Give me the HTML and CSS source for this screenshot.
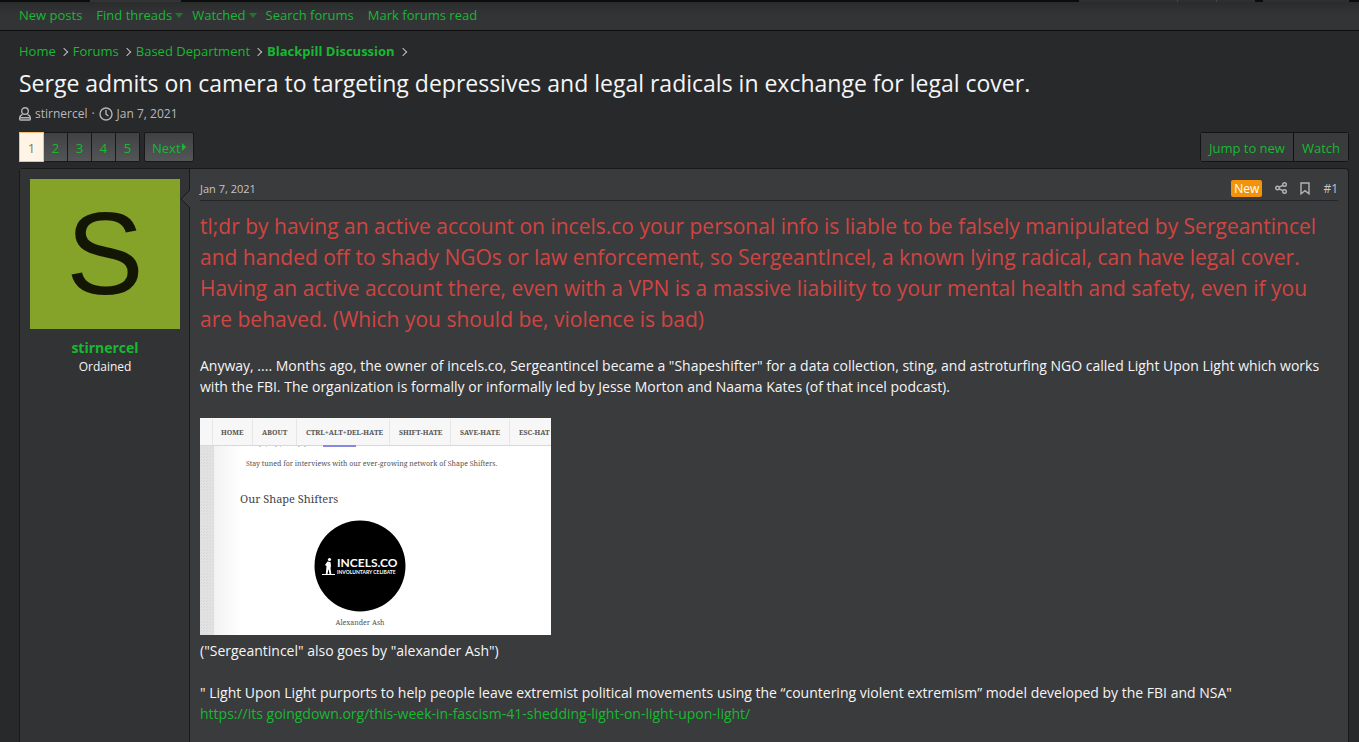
FILE: index.html
```html
<!DOCTYPE html>
<html lang="en">
<head>
    <meta charset="UTF-8">
    <meta name="viewport" content="width=device-width, initial-scale=1.0">
    <title>Serge admits on camera to targeting depressives and legal radicals in exchange for legal cover.</title>
    <link rel="stylesheet" href="styles.css">
</head>
<body>
    <div class="topbar">
        <div class="topbar-tab"></div>
        <div class="topbar-group">
            <div></div>
            <div></div>
            <div></div>
        </div>
        <div class="topbar-search"></div>
    </div>
    <nav class="subnav">
        <a href="#">New posts</a>
        <a href="#" class="has-menu">Find threads</a>
        <a href="#" class="has-menu">Watched</a>
        <a href="#">Search forums</a>
        <a href="#">Mark forums read</a>
    </nav>

    <main class="page">
        <ul class="breadcrumbs">
            <li><a href="#">Home</a></li>
            <li><a href="#">Forums</a></li>
            <li><a href="#">Based Department</a></li>
            <li><a href="#" class="current">Blackpill Discussion</a></li>
        </ul>
        <h1>Serge admits on camera to targeting depressives and legal radicals in exchange for legal cover.</h1>
        <div class="thread-info">
            <svg class="icon" width="12" height="14" viewBox="0 0 12 14">
                <circle cx="6" cy="4" r="3.3"/>
                <path d="M3.5 7.6C1.6 8.1.7 9.4.7 11.2v1.1c0 .4.3.7.7.7h9.2c.4 0 .7-.3.7-.7v-1.1c0-1.8-.9-3.1-2.8-3.6M.8 10.7h10.4"/>
            </svg>
            <a href="#">stirnercel</a>
            <span>·</span>
            <svg class="icon" width="14" height="14" viewBox="0 0 14 14">
                <circle cx="7" cy="7" r="6"/>
                <path d="M7 3v4.2l2.4 1.7"/>
            </svg>
            <a href="#">Jan 7, 2021</a>
        </div>

        <div class="toolbar">
            <div class="pages">
                <a href="#" class="active">1</a>
                <a href="#">2</a>
                <a href="#">3</a>
                <a href="#">4</a>
                <a href="#">5</a>
            </div>
            <a href="#" class="next">Next</a>
            <div class="actions">
                <button type="button">Jump to new</button>
                <button type="button">Watch</button>
            </div>
        </div>

        <article class="message">
            <aside class="user">
                <a href="#" class="avatar">S</a>
                <a href="#" class="username">stirnercel</a>
                <div class="user-title">Ordained</div>
                <svg class="arrow" width="10" height="20" viewBox="0 0 10 20">
                    <path class="arrow-fill" d="M10 1 1 10l9 9z"/>
                    <path class="arrow-line" d="M10 1 1 10l9 9"/>
                </svg>
            </aside>
            <div class="post">
                <header class="post-header">
                    <a href="#" class="date">Jan 7, 2021</a>
                    <span class="new">New</span>
                    <a href="#" class="post-link" aria-label="Share">
                        <svg class="icon" width="12" height="12" viewBox="0 0 12 12">
                            <circle cx="2.5" cy="6" r="1.8"/>
                            <circle cx="9.5" cy="2.5" r="1.8"/>
                            <circle cx="9.5" cy="9.5" r="1.8"/>
                            <path d="M4.2 5.2 7.8 3.3M4.2 6.8l3.6 1.9"/>
                        </svg>
                    </a>
                    <a href="#" class="post-link" aria-label="Bookmark">
                        <svg class="icon" width="10" height="13" viewBox="0 0 10 13">
                            <path d="M1 1h8v10.8L5 8.6l-4 3.2z"/>
                        </svg>
                    </a>
                    <a href="#" class="post-link">#1</a>
                </header>
                <div class="post-body">
                    <p class="tldr">tl;dr by having an active account on incels.co your personal info is liable to be falsely manipulated by Sergeantincel and handed off to shady NGOs or law enforcement, so SergeantIncel, a known lying radical, can have legal cover. Having an active account there, even with a VPN is a massive liability to your mental health and safety, even if you are behaved. (Which you should be, violence is bad)</p>
                    <p>Anyway, .... Months ago, the owner of incels.co, Sergeantincel became a "Shapeshifter" for a data collection, sting, and astroturfing NGO called Light Upon Light which works with the FBI. The organization is formally or informally led by Jesse Morton and Naama Kates (of that incel podcast).</p>
                    <figure>
                        <svg class="shot" width="351" height="217" viewBox="0 0 351 217">
                            <defs>
                                <pattern id="linen" width="3" height="3" patternUnits="userSpaceOnUse">
                                    <rect width="3" height="3" fill="#e2e2e2"/>
                                    <path d="M0 0h1v1H0zM1 2h1v1H1z" fill="#d8d8d8"/>
                                </pattern>
                                <linearGradient id="edge">
                                    <stop offset="0" stop-color="#f2f2f2"/>
                                    <stop offset="1" stop-color="#fff"/>
                                </linearGradient>
                            </defs>
                            <rect width="351" height="217" fill="#fff"/>
                            <rect y="27" width="14" height="190" fill="url(#linen)"/>
                            <rect x="14" y="27" width="28" height="190" fill="url(#edge)"/>
                            <path d="M59 28h2M66 28h1M75 28h2M80 28h1M98 28h2M104 28h2" stroke="#999"/>
                            <rect width="351" height="27" fill="#f7f7f7"/>
                            <path d="M0 27.500h351" stroke="#d8d8d8"/>
                            <rect x="123" y="27" width="33" height="2" fill="#8888e0"/>
                            <path d="M12.500 1v26M52.500 1v26M96.500 1v26M189.500 1v26M250.500 1v26M309.500 1v26" stroke="#e6e6e6"/>
                            <g class="shot-nav">
                                <text x="21" y="17">HOME</text>
                                <text x="62" y="17">ABOUT</text>
                                <text x="106" y="17">CTRL+ALT+DEL-HATE</text>
                                <text x="199" y="17">SHIFT-HATE</text>
                                <text x="260" y="17">SAVE-HATE</text>
                                <text x="319" y="17">ESC-HAT</text>
                            </g>
                            <text class="shot-text" x="46" y="48">Stay tuned for interviews with our ever-growing network of Shape Shifters.</text>
                            <text class="shot-title" x="40" y="85">Our Shape Shifters</text>
                            <circle cx="160" cy="148" r="45.500"/>
                            <g fill="#fff">
                                <circle cx="129.500" cy="141.500" r="1.600"/>
                                <path d="M127.500 143.500l3 .5.5 4-.5 2 .8 6h-1.800l-1-5-1 5h-1.700l.7-8-1.500-1z"/>
                                <rect x="122" y="156" width="13" height="1"/>
                            </g>
                            <text class="logo-name" x="137" y="149">INCELS.CO</text>
                            <text class="logo-sub" x="137" y="156">INVOLUNTARY CELIBATE</text>
                            <text class="shot-text shot-caption" x="160" y="207">Alexander Ash</text>
                        </svg>
                        <figcaption>("Sergeantincel" also goes by "alexander Ash")</figcaption>
                    </figure>
                    <p>" Light Upon Light purports to help people leave extremist political movements using the “countering violent extremism” model developed by the FBI and NSA"<br>
                    <a href="#">https://its goingdown.org/this-week-in-fascism-41-shedding-light-on-light-upon-light/</a></p>
                </div>
            </div>
        </article>
    </main>
</body>
</html>
```
FILE: styles.css
```css
* {
    box-sizing: border-box;
}
body {
    display: flex;
    flex-direction: column;
    min-height: 100vh;
    margin: 0;
    background-color: #28292b;
    color: #f5f5f5;
    font-family: "Segoe UI", "Open Sans", "Noto Sans", sans-serif;
    font-size: 14px;
    line-height: 21px;
}
a {
    color: #18b832;
    text-decoration: none;
}
a:hover {
    text-decoration: underline;
}
h1, p, ul, figure {
    margin: 0;
    padding: 0;
}
.icon {
    flex: none;
    fill: none;
    stroke: #b4b4b6;
    stroke-width: 1.4;
}

/* bottom edge of the site header */
.topbar {
    display: flex;
    gap: 8px;
    height: 2px;
    padding: 0 10px 0 90px;
    background-color: #0c0d0d;
}
.topbar-tab {
    width: 91px;
    margin-right: auto;
    background-color: #323335;
}
.topbar-group {
    display: grid;
    grid-template-columns: 98px 39px 39px;
}
.topbar-group div {
    background-color: #2e302f;
}
.topbar-group div + div {
    border-left: 1px solid #454647;
}
.topbar-search {
    width: 86px;
    background-color: #2e302f;
}

.subnav {
    display: flex;
    align-items: flex-start;
    gap: 14px;
    height: 29px;
    padding: 0 19px;
    border-bottom: 1px solid #0c0c0d;
    background: linear-gradient(#2a2b2b, #333436 12px);
    font-size: 13px;
    line-height: 27px;
}
.has-menu {
    display: flex;
    align-items: center;
    gap: 3px;
    margin-right: -5px;
}
.has-menu::after {
    content: "";
    border: 4px solid transparent;
    border-top: 5px solid #20742e;
    border-bottom: 0;
}

.page {
    display: flex;
    flex: 1;
    flex-direction: column;
    padding: 10px 10px 0 19px;
}
.breadcrumbs {
    display: flex;
    list-style: none;
    font-size: 13px;
}
.breadcrumbs li {
    display: flex;
    align-items: center;
}
.breadcrumbs li::after {
    content: "";
    width: 5px;
    height: 5px;
    margin: 0 6px 0 5px;
    border: solid #c0c0c0;
    border-width: 1px 1px 0 0;
    transform: rotate(45deg);
}
.breadcrumbs .current {
    font-weight: bold;
}
h1 {
    margin-top: 4px;
    font-size: 23px;
    font-weight: normal;
    line-height: 34px;
}
.thread-info {
    display: flex;
    align-items: center;
    gap: 4px;
    margin-top: 6px;
    font-size: 12px;
    line-height: 16px;
}
.thread-info, .thread-info a {
    color: #b8b8ba;
}

.toolbar {
    display: flex;
    gap: 4px;
    margin-top: 10px;
    font-size: 13px;
    line-height: 30px;
}
.pages {
    display: flex;
    border: 1px solid #18191a;
    border-radius: 2px;
}
.pages a, .next {
    background: linear-gradient(#404143, #545557);
}
.pages a {
    width: 24px;
    height: 28px;
    text-align: center;
}
.pages a + a {
    border-left: 1px solid #18191a;
}
.pages .active {
    margin: -1px 0 -1px -1px;
    width: 25px;
    height: 30px;
    border: 1px solid #f9bd74;
    background: #fff4e5;
    color: #85786c;
}
.pages .active + a {
    border-left: 0;
    width: 23px;
}
.next {
    display: flex;
    height: 30px;
    padding: 0 7px;
    border: 1px solid #18191a;
    border-radius: 2px;
}
.next::after {
    content: "";
    align-self: center;
    margin-left: 1px;
    border: 4px solid transparent;
    border-left: 4px solid #18b832;
    border-right: 0;
}
.actions {
    display: flex;
    margin-left: auto;
    border: 1px solid #141415;
    border-radius: 3px;
}
.actions button {
    height: 28px;
    padding: 0 8px;
    border: 0;
    background-color: #3a3b3d;
    color: #18b832;
    font: inherit;
    cursor: pointer;
}
.actions button + button {
    border-left: 1px solid #0f0f10;
}

.message {
    display: flex;
    flex: 1;
    margin-top: 6px;
    border: 1px solid #19191a;
    border-bottom: 0;
    border-radius: 4px 4px 0 0;
    background-color: #3a3b3d;
}
.user {
    position: relative;
    flex: none;
    width: 170px;
    padding: 10px 9px 10px 10px;
    border-right: 1px solid #19191a;
    background-color: #323335;
    text-align: center;
}
.avatar {
    display: block;
    height: 150px;
    background-color: #85a329;
    color: #141605;
    font-family: "Liberation Sans", Arial, sans-serif;
    font-size: 116px;
    line-height: 150px;
}
.username {
    display: block;
    margin-top: 8px;
    font-weight: bold;
}
.user-title {
    font-size: 12px;
    line-height: 18px;
}
.arrow {
    position: absolute;
    top: 20px;
    right: -1px;
}
.arrow-fill {
    fill: #3a3b3d;
}
.arrow-line {
    fill: none;
    stroke: #19191a;
}
.post {
    flex: 1;
    min-width: 0;
    padding: 10px;
}
.post-header {
    display: flex;
    align-items: center;
    gap: 13px;
    height: 22px;
    padding-bottom: 3px;
    border-bottom: 1px solid #242526;
    font-size: 12px;
}
.post-header a {
    display: flex;
    color: #c4c4c6;
}
.post-header .date {
    margin-right: auto;
    font-size: 11px;
}
.new {
    padding: 0 3px;
    border-radius: 2px;
    background-color: #f2930d;
    color: #fff;
    font-size: 12px;
    line-height: 17px;
}
.post-body {
    padding-top: 10px;
}
.tldr {
    margin-bottom: 20px;
    color: #d04541;
    font-size: 21px;
    line-height: 31px;
}
figure {
    margin: 21px 0;
}
.shot {
    display: block;
    margin-bottom: 5px;
}
.shot text {
    fill: #555;
    font-family: "Noto Serif", "Liberation Serif", serif;
}
.shot .shot-nav text {
    font-size: 7px;
    font-weight: bold;
}
.shot .shot-text {
    font-size: 7px;
}
.shot .shot-title {
    font-size: 11px;
    fill: #444;
}
.shot .shot-caption {
    text-anchor: middle;
}
.shot .logo-name, .shot .logo-sub {
    fill: #fff;
    font-family: Lato, sans-serif;
    font-weight: bold;
}
.shot .logo-name {
    font-size: 12px;
}
.shot .logo-sub {
    font-size: 5px;
}
```
